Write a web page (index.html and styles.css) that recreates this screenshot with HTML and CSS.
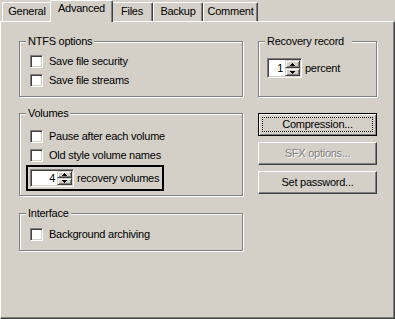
FILE: index.html
```html
<!DOCTYPE html>
<html lang="en">
<head>
	<meta charset="utf-8">
	<title>Archive options - Advanced</title>
	<link rel="stylesheet" href="styles.css">
</head>
<body>
	<div class="tabs">
		<div class="tab general">General</div>
		<div class="tab advanced active">Advanced</div>
		<div class="tab files">Files</div>
		<div class="tab backup">Backup</div>
		<div class="tab comment">Comment</div>
	</div>

	<div class="panel">
		<div class="content">
			<fieldset class="group ntfs">
				<legend>NTFS options</legend>
				<label class="opt"><span class="check"></span>Save file security</label>
				<label class="opt"><span class="check"></span>Save file streams</label>
			</fieldset>

			<fieldset class="group recovery">
				<legend>Recovery record</legend>
				<div class="spinrow">
					<span class="spin small">
						<span class="val">1</span>
						<span class="arrows">
							<span><svg width="5" height="3"><path d="M2 0h1v1h1v1h1v1H0V2h1V1h1z"/></svg></span>
							<span><svg width="5" height="3"><path d="M0 0h5v1H4v1H3v1H2V2H1V1H0z"/></svg></span>
						</span>
					</span>
					<span class="unit">percent</span>
				</div>
			</fieldset>

			<fieldset class="group volumes">
				<legend>Volumes</legend>
				<label class="opt"><span class="check"></span>Pause after each volume</label>
				<label class="opt"><span class="check"></span>Old style volume names</label>
				<div class="volbox">
					<span class="spin wide">
						<span class="val">4</span>
						<span class="arrows">
							<span><svg width="5" height="3"><path d="M2 0h1v1h1v1h1v1H0V2h1V1h1z"/></svg></span>
							<span><svg width="5" height="3"><path d="M0 0h5v1H4v1H3v1H2V2H1V1H0z"/></svg></span>
						</span>
					</span>
					<span class="unit">recovery volumes</span>
				</div>
			</fieldset>

			<div class="buttons">
				<div class="btn default"><span class="focus">Compression...</span></div>
				<div class="btn disabled">SFX options...</div>
				<div class="btn">Set password...</div>
			</div>

			<fieldset class="group interface">
				<legend>Interface</legend>
				<label class="opt"><span class="check"></span>Background archiving</label>
			</fieldset>
		</div>
	</div>
</body>
</html>
```

FILE: styles.css
```css
* {
	box-sizing: border-box;
}

body {
	margin: 0;
	width: 395px;
	height: 319px;
	overflow: hidden;
	background: #d4d0c8;
	color: #000;
	font-family: "Liberation Sans", Arial, sans-serif;
	font-size: 11px;
	line-height: 13px;
	letter-spacing: -0.25px;
	white-space: nowrap;
}

/* tabs */

.tabs {
	display: flex;
	align-items: flex-end;
	height: 21px;
	padding-left: 2px;
}

.tab {
	height: 19px;
	padding-top: 2px;
	text-align: center;
	background: #d4d0c8;
	border-top: 1px solid #fff;
	border-left: 1px solid #fff;
	border-right: 1px solid #404040;
	box-shadow: inset -1px 0 #808080;
	border-radius: 2px 2px 0 0;
}

.tab.active {
	height: 22px;
	padding-top: 1px;
	margin: 0 -2px -1px;
	position: relative;
	z-index: 1;
}

.general { width: 50px; }
.advanced { width: 63px; }
.files { width: 42px; }
.backup { width: 50px; }
.comment { width: 55px; }

/* page */

.panel {
	height: 298px;
	border: 1px solid;
	border-color: #fff #404040 #404040 #fff;
	box-shadow: inset -1px -1px #808080;
	padding: 13px 0 0 18px;
}

.content {
	display: grid;
	grid-template-columns: 224px 119px;
	column-gap: 15px;
	row-gap: 10px;
	align-items: start;
}

.group {
	margin: 0;
	min-width: 0;
	padding: 0 6px;
	border: 1px solid #808080;
	box-shadow: inset 1px 1px #fff, 1px 1px #fff;
}

.group legend {
	padding: 0 2px;
	line-height: 13px;
	background: #d4d0c8;
}

.ntfs {
	padding-top: 7px;
	padding-bottom: 9px;
}

.recovery {
	align-self: stretch;
	padding-top: 10px;
}

.recovery legend {
	padding-right: 8px;
}

.volumes {
	padding-top: 10px;
	padding-bottom: 4px;
}

.interface {
	margin-top: 1px;
	padding-top: 8px;
	padding-bottom: 9px;
}

.opt {
	display: flex;
	align-items: center;
	height: 13px;
	margin-left: 4px;
}

.opt + .opt {
	margin-top: 6px;
}

.check {
	width: 13px;
	height: 13px;
	margin-right: 6px;
	background: #fff;
	border: 1px solid;
	border-color: #808080 #fff #fff #808080;
	box-shadow: inset 1px 1px #404040, inset -1px -1px #d4d0c8;
}

/* spin boxes */

.spinrow {
	display: flex;
	align-items: center;
	margin-left: 2px;
}

.spin {
	display: flex;
	height: 20px;
	padding: 1px;
	background: #fff;
	border: 1px solid;
	border-color: #808080 #fff #fff #808080;
	box-shadow: inset 1px 1px #404040, inset -1px -1px #d4d0c8;
}

.spin.small { width: 35px; }
.spin.wide { width: 44px; height: 18px; }

.val {
	flex: 1;
	text-align: right;
	padding-right: 2px;
	line-height: 16px;
}

.wide .val {
	line-height: 14px;
}

.arrows {
	display: flex;
	flex-direction: column;
	width: 15px;
}

.arrows span {
	flex: 1;
	display: flex;
	align-items: center;
	justify-content: center;
	background: #d4d0c8;
	border: 1px solid;
	border-color: #d4d0c8 #404040 #404040 #d4d0c8;
	box-shadow: inset 1px 1px #fff, inset -1px -1px #808080;
}

.arrows svg {
	display: block;
}

.unit {
	margin-left: 3px;
}

.volbox {
	display: flex;
	align-items: center;
	width: 138px;
	height: 26px;
	margin-top: 3px;
	padding-left: 2px;
	border: 2px solid #000;
}

/* buttons */

.buttons {
	display: flex;
	flex-direction: column;
	gap: 6px;
	margin-top: 6px;
}

.btn {
	display: flex;
	align-items: center;
	justify-content: center;
	height: 23px;
	border: 1px solid;
	border-color: #fff #404040 #404040 #fff;
	box-shadow: inset -1px -1px #808080;
}

.btn.default {
	padding: 3px;
	border-color: #000;
	box-shadow: inset 1px 1px #fff, inset -1px -1px #808080;
}

.focus {
	flex: 1;
	align-self: stretch;
	display: flex;
	align-items: center;
	justify-content: center;
	border: 1px dotted #000;
}

.btn.disabled {
	color: #808080;
	text-shadow: 1px 1px #fff;
}
```
